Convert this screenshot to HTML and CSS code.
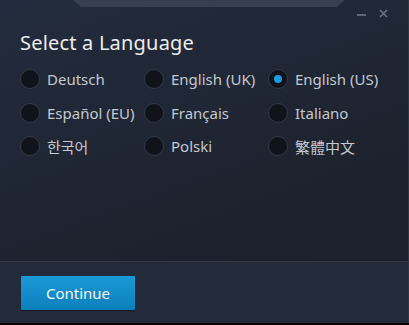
FILE: index.html
```html
<!DOCTYPE html>
<html lang="en">
<head>
  <meta charset="UTF-8" />
  <title>Select a Language</title>
  <link rel="stylesheet" href="styles.css">
</head>
<body>
  <div class="window">
    <div class="tab"></div>
    <div class="controls">
      <span class="min"></span>
      <svg class="close" width="9" height="9" viewBox="0 0 9 9">
        <path d="M1 1 L8 8 M8 1 L1 8" stroke="#6c7382" stroke-width="1.6" />
      </svg>
    </div>

    <main class="content">
      <h1>Select a Language</h1>
      <div class="langs">
        <label class="lang"><span class="dot"></span>Deutsch</label>
        <label class="lang"><span class="dot"></span>English (UK)</label>
        <label class="lang"><span class="dot on"></span>English (US)</label>
        <label class="lang"><span class="dot"></span>Español (EU)</label>
        <label class="lang"><span class="dot"></span>Français</label>
        <label class="lang"><span class="dot"></span>Italiano</label>
        <label class="lang"><span class="dot"></span>한국어</label>
        <label class="lang"><span class="dot"></span>Polski</label>
        <label class="lang"><span class="dot"></span>繁體中文</label>
      </div>
    </main>

    <footer class="footer">
      <button class="continue">Continue</button>
    </footer>
  </div>
</body>
</html>
```
FILE: styles.css
```css
body {
  margin: 0;
  background: #000;
  font-family: "Noto Sans", "Noto Sans CJK KR", sans-serif;
}

.window {
  position: relative;
  width: 408px;
  height: 323px;
  display: flex;
  flex-direction: column;
  background: linear-gradient(160deg, #232c3e 0%, #1e2431 50%, #1b1f28 100%);
  border-right: 1px solid #2e3543;
  overflow: hidden;
}

.tab {
  position: absolute;
  top: 0;
  left: 73px;
  width: 272px;
  height: 7px;
  background: #383f4e;
  clip-path: polygon(0 0, 100% 0, 97% 100%, 3% 100%);
}

.controls {
  position: absolute;
  top: 9px;
  right: 20px;
  display: flex;
  align-items: flex-start;
  gap: 13px;
}

.min {
  width: 9px;
  height: 2px;
  margin-top: 5px;
  background: #5f6675;
}

.content {
  flex: 1;
  padding: 30px 0 0 20px;
}

h1 {
  margin: 0 0 12px;
  font-size: 20px;
  line-height: 26px;
  font-weight: normal;
  color: #eceded;
  letter-spacing: 0.2px;
}

.langs {
  display: grid;
  grid-template-columns: repeat(3, 124px);
  row-gap: 13.5px;
  padding-top: 1px;
}

.lang {
  display: flex;
  align-items: center;
  gap: 7px;
  height: 20px;
  font-size: 15px;
  color: #c4c8cf;
}

.dot {
  width: 18px;
  height: 18px;
  border-radius: 50%;
  background: #10131a;
  border: 1px solid #343b49;
  display: flex;
  align-items: center;
  justify-content: center;
}

.dot.on::after {
  content: "";
  width: 8px;
  height: 8px;
  border-radius: 50%;
  background: #1a9de0;
}

.footer {
  height: 62px;
  background: #232a3a;
  border-top: 1px solid #323949;
  padding: 14px 0 0 21px;
  box-sizing: border-box;
}

.continue {
  width: 114px;
  height: 34px;
  border: none;
  border-radius: 1px;
  background: linear-gradient(#1b9ad8, #0b7fba);
  color: #f4f8fb;
  font-family: "Noto Sans", sans-serif;
  font-size: 15px;
  box-shadow: 0 1px 1px rgba(0, 0, 0, 0.4);
}
```
